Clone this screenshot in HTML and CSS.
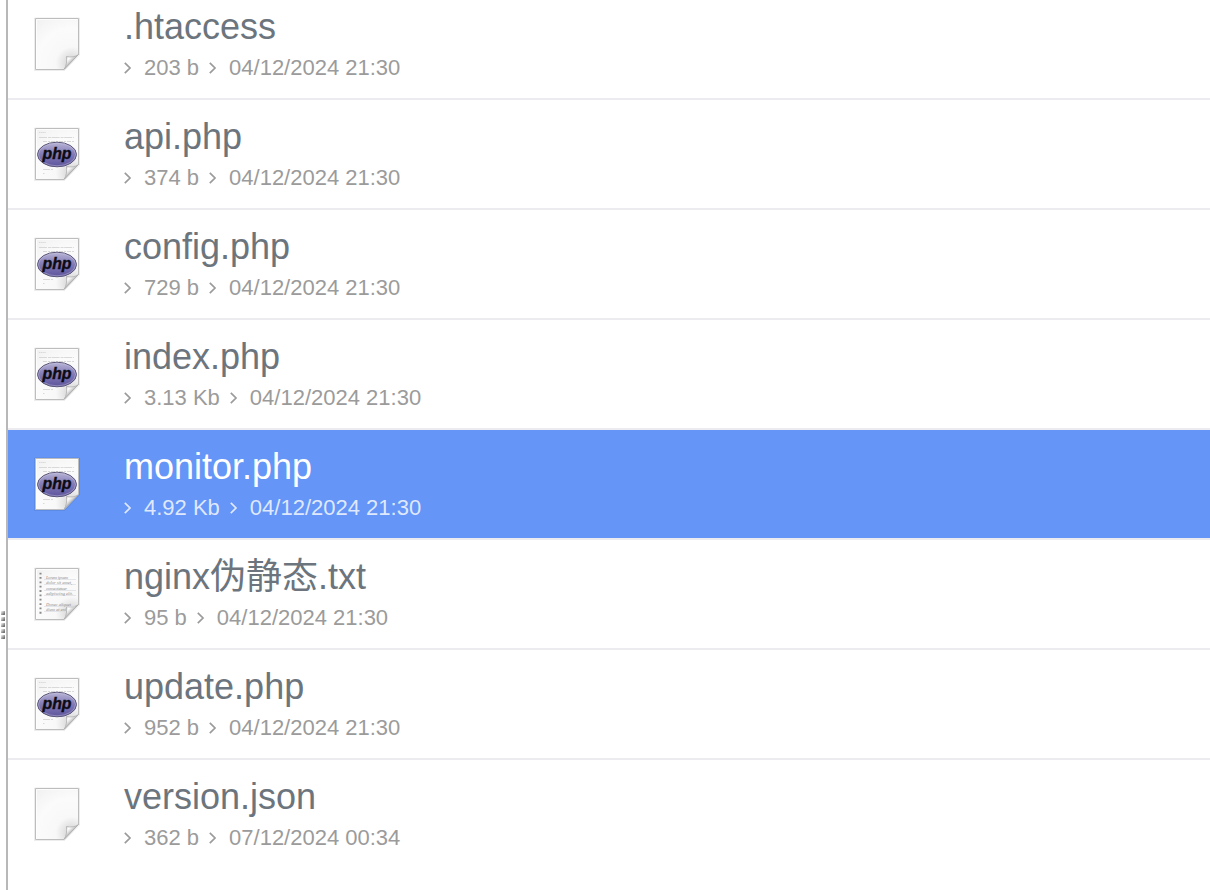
FILE: index.html
```
<!DOCTYPE html>
<html>
    <head>
        <meta charset="utf-8">
        <title>Files</title>
        <link rel="stylesheet" href="styles.css">
    </head>
    <body>
        <svg class="defs" width="0" height="0">
            <defs>
                <radialGradient id="paper" gradientUnits="userSpaceOnUse" cx="39" cy="47" r="58">
                    <stop offset="0" stop-color="#cfcfcf"/>
                    <stop offset="0.13" stop-color="#e2e2e2"/>
                    <stop offset="0.28" stop-color="#f8f8f8"/>
                    <stop offset="0.6" stop-color="#fbfbfb"/>
                    <stop offset="1" stop-color="#f0f0f0"/>
                </radialGradient>
                <linearGradient id="curl" gradientUnits="userSpaceOnUse" x1="33" y1="41" x2="39" y2="47">
                    <stop offset="0" stop-color="#dcdcdc"/>
                    <stop offset="0.35" stop-color="#ffffff"/>
                    <stop offset="0.6" stop-color="#e2e2e2"/>
                    <stop offset="1" stop-color="#a2a2a2"/>
                </linearGradient>
                <linearGradient id="oval" x1="0" y1="0" x2="0" y2="1">
                    <stop offset="0" stop-color="#b9b5d6"/>
                    <stop offset="0.45" stop-color="#857eb8"/>
                    <stop offset="1" stop-color="#5c539c"/>
                </linearGradient>
                <symbol id="page" viewBox="0 0 48 56">
                    <path d="M1.500 2H46.500V39L31.500 54.500H1.500Z" fill="none" stroke="#000" stroke-opacity="0.07"/>
                    <path d="M2.500 2.500H45.500V38.500L31 53.500H2.500Z" fill="url(#paper)" stroke="#bdbdbd"/>
                    <path d="M3.500 53V3.500H44.500" fill="none" stroke="#fff" stroke-opacity="0.8"/>
                    <path d="M31 53.500C33.500 50 34 45 33.500 40.500C38 41.500 42.500 41 45.500 38.500Z" fill="url(#curl)" stroke="#adadad" stroke-width="0.8"/>
                </symbol>
                <symbol id="php" viewBox="0 0 48 56">
                    <use href="#page"/>
                    <g stroke="#d0d0d0" stroke-width="0.8">
                        <path d="M6 6.500h7" stroke-dasharray="1.500 0.6"/>
                        <path d="M6 11.500h35" stroke-dasharray="8 1 3 0.6"/>
                        <path d="M10 15.500h31" stroke-dasharray="4 1 2 1"/>
                        <path d="M10 43.500h11" stroke-dasharray="7 1 2 1"/>
                        <path d="M10 47.500h1.500"/>
                    </g>
                    <ellipse cx="24" cy="28.500" rx="19.500" ry="12.300" fill="url(#oval)" stroke="#5a5678"/>
                    <ellipse cx="24" cy="28.500" rx="18.500" ry="11.300" fill="none" stroke="#c9c6e0" stroke-opacity="0.5" stroke-width="0.9"/>
                    <text class="php-mark" x="24" y="32.500" text-anchor="middle" textLength="29" lengthAdjust="spacingAndGlyphs">php</text>
                </symbol>
                <symbol id="txt" viewBox="0 0 48 56">
                    <use href="#page"/>
                    <path d="M7.500 6.700V50" stroke="#8a8a8a" stroke-width="2" stroke-dasharray="1.800 2.550"/>
                    <path d="M11 13.500H43M11 18.500H43M11 24.500H43M11 29.500H43M11 40.500H42M11 45.500H33" stroke="#dadde2" stroke-width="0.7"/>
                    <g class="note">
                        <text x="13" y="13" textLength="22">Lorem ipsum</text>
                        <text x="13" y="18.400" textLength="26">dolor sit amet,</text>
                        <text x="13" y="23.800" textLength="21">consectetuer</text>
                        <text x="13" y="29" textLength="27">adipiscing elit.</text>
                        <text x="13" y="39.800" textLength="25">Donec aliquet</text>
                        <text x="13" y="45" textLength="20">diam at eni</text>
                    </g>
                </symbol>
                <symbol id="arrow" viewBox="0 0 8 14">
                    <path d="M0.800 1.900L6 7L0.800 12.100" fill="none" stroke="currentColor" stroke-width="1.700"/>
                </symbol>
            </defs>
        </svg>
        <div class="container">
            <div class="splitter">
                <i></i><i></i><i></i><i></i><i></i>
            </div>
            <div class="files">
                <div class="file">
                    <svg class="icon"><use href="#page"/></svg>
                    <div class="info">
                        <div class="name">.htaccess</div>
                        <div class="meta">
                            <span><svg class="arrow"><use href="#arrow"/></svg>203 b</span>
                            <span><svg class="arrow"><use href="#arrow"/></svg>04/12/2024 21:30</span>
                        </div>
                    </div>
                </div>
                <div class="file">
                    <svg class="icon"><use href="#php"/></svg>
                    <div class="info">
                        <div class="name">api.php</div>
                        <div class="meta">
                            <span><svg class="arrow"><use href="#arrow"/></svg>374 b</span>
                            <span><svg class="arrow"><use href="#arrow"/></svg>04/12/2024 21:30</span>
                        </div>
                    </div>
                </div>
                <div class="file">
                    <svg class="icon"><use href="#php"/></svg>
                    <div class="info">
                        <div class="name">config.php</div>
                        <div class="meta">
                            <span><svg class="arrow"><use href="#arrow"/></svg>729 b</span>
                            <span><svg class="arrow"><use href="#arrow"/></svg>04/12/2024 21:30</span>
                        </div>
                    </div>
                </div>
                <div class="file">
                    <svg class="icon"><use href="#php"/></svg>
                    <div class="info">
                        <div class="name">index.php</div>
                        <div class="meta">
                            <span><svg class="arrow"><use href="#arrow"/></svg>3.13 Kb</span>
                            <span><svg class="arrow"><use href="#arrow"/></svg>04/12/2024 21:30</span>
                        </div>
                    </div>
                </div>
                <div class="file selected">
                    <svg class="icon"><use href="#php"/></svg>
                    <div class="info">
                        <div class="name">monitor.php</div>
                        <div class="meta">
                            <span><svg class="arrow"><use href="#arrow"/></svg>4.92 Kb</span>
                            <span><svg class="arrow"><use href="#arrow"/></svg>04/12/2024 21:30</span>
                        </div>
                    </div>
                </div>
                <div class="file">
                    <svg class="icon"><use href="#txt"/></svg>
                    <div class="info">
                        <div class="name">nginx伪静态.txt</div>
                        <div class="meta">
                            <span><svg class="arrow"><use href="#arrow"/></svg>95 b</span>
                            <span><svg class="arrow"><use href="#arrow"/></svg>04/12/2024 21:30</span>
                        </div>
                    </div>
                </div>
                <div class="file">
                    <svg class="icon"><use href="#php"/></svg>
                    <div class="info">
                        <div class="name">update.php</div>
                        <div class="meta">
                            <span><svg class="arrow"><use href="#arrow"/></svg>952 b</span>
                            <span><svg class="arrow"><use href="#arrow"/></svg>04/12/2024 21:30</span>
                        </div>
                    </div>
                </div>
                <div class="file">
                    <svg class="icon"><use href="#page"/></svg>
                    <div class="info">
                        <div class="name">version.json</div>
                        <div class="meta">
                            <span><svg class="arrow"><use href="#arrow"/></svg>362 b</span>
                            <span><svg class="arrow"><use href="#arrow"/></svg>07/12/2024 00:34</span>
                        </div>
                    </div>
                </div>
            </div>
        </div>
    </body>
</html>
```
FILE: styles.css
```
*{
    padding: 0;
    margin: 0;
    box-sizing: border-box;
}
body {
    background-color: #ffffff;
    font-family: "Liberation Sans", "Noto Sans CJK SC", sans-serif;
    overflow: hidden;
}
.defs{
    display: block;
}
.container{
    display: flex;
    height: 890px;
    overflow: hidden;
}

/* drag handle on the left */
.splitter{
    display: flex;
    flex-direction: column;
    gap: 2px;
    width: 8px;
    padding: 611px 0 0 1px;
    border-right: 2px solid #b8b8b8;
}
.splitter i{
    width: 4px;
    height: 4px;
    background: linear-gradient(135deg, #e2e2e2 15%, #777777 75%);
}

.files{
    flex: 1;
    margin-top: -10px;
}
.file{
    display: flex;
    height: 110px;
    padding: 17px 0 0 25px;
    border-bottom: 2px solid #ebebf0;
    color: #6c757d;
}
.file:last-child{
    border-bottom: none;
}
.icon{
    width: 48px;
    height: 56px;
    margin-top: 9px;
}
.info{
    margin-left: 43px;
}
.name{
    height: 42px;
    line-height: 40px;
    font-size: 36px;
    white-space: nowrap;
}
.meta{
    display: flex;
    gap: 10px;
    height: 38px;
    line-height: 38px;
    font-size: 22px;
    color: #9b9b9b;
}
.meta span{
    display: flex;
    align-items: center;
}
.arrow{
    width: 8px;
    height: 14px;
    margin-right: 12px;
}

.selected{
    background-color: #6495f7;
    color: #ffffff;
}
.selected .meta{
    color: #dfe8fd;
}

.php-mark{
    font: italic bold 16px "Liberation Sans", sans-serif;
    fill: #0c0b14;
    stroke: #0c0b14;
    stroke-width: 0.4px;
}
.note{
    font: italic 4.5px "Liberation Serif", serif;
    fill: #8c8c8c;
}
```
